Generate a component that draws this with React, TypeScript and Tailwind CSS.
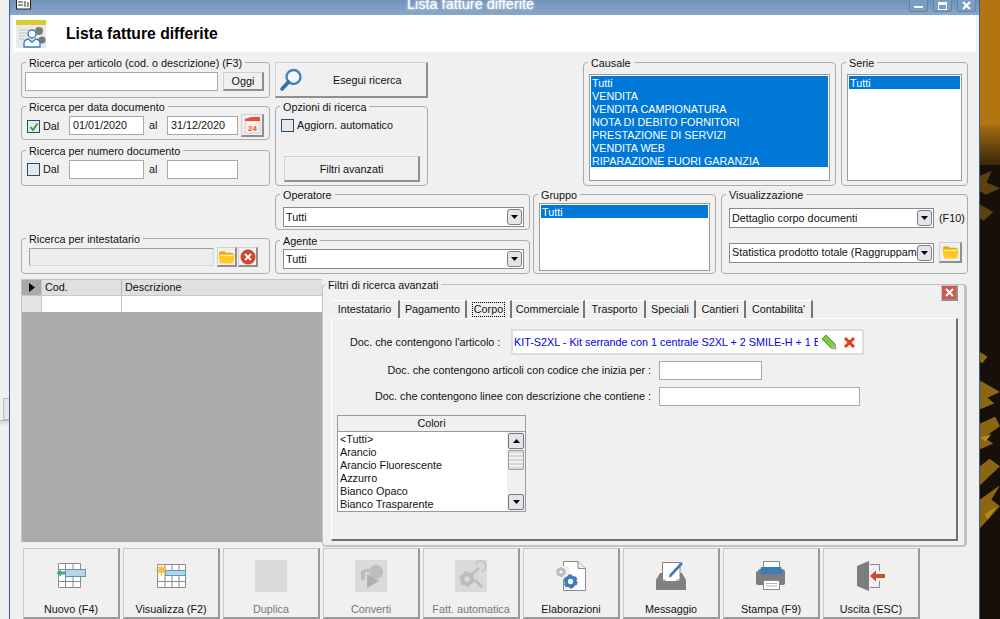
import React from 'react';

const Group: React.FC<{ title: string; className?: string; children?: React.ReactNode }> = ({ title, className = '', children }) => (
  <div className={`relative rounded-[4px] border border-[#ababab] ${className}`}>
    <span className="absolute left-[4px] top-[-7px] bg-[#f0f0f0] px-[3px] leading-[14px] whitespace-nowrap">{title}</span>
    {children}
  </div>
);

const bevel = 'border border-[#d0d0d0] border-r-2 border-b-2 border-r-[#8f8f8f] border-b-[#8f8f8f] bg-[#f0f0f0]';

const Input: React.FC<{ value?: string; className?: string }> = ({ value, className = '' }) => (
  <div className={`flex items-center border border-[#a9a9a9] bg-white pl-[3px] leading-none ${className}`}>{value}</div>
);

const Check: React.FC<{ checked?: boolean; className?: string }> = ({ checked, className = '' }) => (
  <div className={`flex h-[13px] w-[13px] shrink-0 items-center justify-center border border-[#1f4f7f] bg-[#e8e8e8] ${className}`}>
    {checked && (
      <svg width="10" height="10" viewBox="0 0 10 10">
        <path d="M1.5 5 L4 8 L8.5 1.5" fill="none" stroke="#1fa83a" strokeWidth="1.8" />
      </svg>
    )}
  </div>
);

const ComboArrow = () => (
  <div className="flex h-[16px] w-[15px] shrink-0 items-center justify-center rounded-[3px] border border-[#7f7f7f] bg-[#e4e4ea]">
    <svg width="7" height="4" viewBox="0 0 7 4"><path d="M0 0H7L3.5 4Z" fill="#000" /></svg>
  </div>
);

const Combo: React.FC<{ value: string; className?: string }> = ({ value, className = '' }) => (
  <div className={`flex items-center justify-between border border-[#8a8a8a] bg-white pl-[2px] pr-[1px] ${className}`}>
    <span className="overflow-hidden whitespace-nowrap">{value}</span>
    <ComboArrow />
  </div>
);

const ListBox: React.FC<{ items: string[]; className?: string }> = ({ items, className = '' }) => (
  <div className={`border border-[#9a9a9a] bg-white p-[1px] ${className}`}>
    {items.map((t) => (
      <div key={t} className="h-[13px] whitespace-nowrap bg-[#0078d7] pl-[1px] leading-[14px] text-white">{t}</div>
    ))}
  </div>
);

const Folder = () => (
  <svg width="17" height="14" viewBox="0 0 16 13">
    <path d="M1 2.5Q1 1 2.5 1H6L7.5 2.5H13Q14.5 2.5 14.5 4V5H1Z" fill="#e8a90c" />
    <path d="M0.5 5Q0.5 4 2 4H14Q15.5 4 15.5 5L14.5 11Q14.3 12.5 13 12.5H3Q1.7 12.5 1.5 11Z" fill="#ffc823" />
    <path d="M2 5H14" stroke="#fff3b8" strokeWidth="1" />
  </svg>
);

const RedCircleX = () => (
  <svg width="16" height="16" viewBox="0 0 16 16">
    <circle cx="8" cy="8" r="7.5" fill="#d2452f" />
    <path d="M5 5L11 11M11 5L5 11" stroke="#fff" strokeWidth="2" />
  </svg>
);

const Calendar = () => (
  <svg width="17" height="18" viewBox="0 0 17 18">
    <rect x="1" y="3" width="15" height="14" fill="#fbeeea" stroke="#cfcfcf" />
    <path d="M1 3Q8 0 16 1V5H1Z" fill="#d9533c" />
    <text x="8.5" y="14.5" textAnchor="middle" fontSize="8" fontWeight="700" fill="#d9533c" fontFamily="Liberation Sans, sans-serif">24</text>
  </svg>
);

const Magnifier = () => (
  <svg width="24" height="24" viewBox="0 0 24 24">
    <circle cx="14.5" cy="9" r="7" fill="#f4f8fb" stroke="#3f86c0" strokeWidth="2.4" />
    <path d="M9.5 14L3 21" stroke="#2f6fa8" strokeWidth="3.6" strokeLinecap="round" />
  </svg>
);

const Gear: React.FC<{ x: number; y: number; r: number; color: string }> = ({ x, y, r, color }) => (
  <g>
    <circle cx={x} cy={y} r={r * 0.68} fill="none" stroke={color} strokeWidth={r * 0.55} />
    <circle cx={x} cy={y} r={r * 0.95} fill="none" stroke={color} strokeWidth={r * 0.3} strokeDasharray={`${r * 0.55} ${r * 0.45}`} />
  </g>
);

const IconNuovo = () => (
  <svg width="32" height="32" viewBox="0 0 32 32">
    <path d="M3.5 3.5H25.5V27.5H3.5ZM3.5 9.5H25.5M3.5 21.5H25.5M10.5 3.5V27.5M18 3.5V27.5" fill="#fff" stroke="#8a8a8a" />
    <rect x="10.5" y="9.5" width="20" height="7" fill="#bcd2e6" stroke="#4a9cc2" />
    <path d="M1.5 13L6 9.5V11.5H10V14.5H6V16.5Z" fill="#4aa57f" />
  </svg>
);

const IconVisualizza = () => (
  <svg width="32" height="32" viewBox="0 0 32 32">
    <path d="M2.5 4.5H30.5V27.5H2.5ZM2.5 10.5H30.5M2.5 21.5H30.5M10 4.5V27.5M17 4.5V27.5M24 4.5V27.5" fill="#fff" stroke="#8a8a8a" />
    <rect x="10.5" y="10.5" width="20" height="5" fill="#bcd2e6" stroke="#4a9cc2" />
    <circle cx="6.5" cy="10" r="3" fill="#f6c243" />
    <path d="M6.5 4V16M0.5 10H12.5M2.5 6L10.5 14M10.5 6L2.5 14" stroke="#f6c243" strokeWidth="1.2" />
  </svg>
);

const IconBlank = () => <div className="h-[32px] w-[32px] bg-[#dadada]" />;

const IconConverti = () => (
  <svg width="32" height="32" viewBox="0 0 32 32">
    <rect width="32" height="32" fill="#dadada" />
    <path d="M6 11L14 8V12H10V20H6Z" fill="#bdbdbd" />
    <circle cx="21" cy="12" r="7" fill="#bdbdbd" />
    <path d="M12 14L24 21L12 28Z" fill="#b0b0b0" />
  </svg>
);

const IconFatt = () => (
  <svg width="32" height="32" viewBox="0 0 32 32">
    <rect width="32" height="32" fill="#dadada" />
    <Gear x={12} y={19} r={7} color="#bcbcbc" />
    <path d="M16 15L24 8M20 20L27 27" stroke="#bcbcbc" strokeWidth="2.5" />
    <path d="M21 5A5 5 0 1 1 27 11" fill="none" stroke="#c6c6c6" strokeWidth="2" />
  </svg>
);

const IconElab = () => (
  <svg width="32" height="32" viewBox="0 0 32 32">
    <path d="M8.5 1.5H23L30.5 8.5V30.5H8.5Z" fill="#fff" stroke="#8a8a8a" />
    <path d="M23 1.5V8.5H30.5" fill="#eee" stroke="#8a8a8a" />
    <rect x="1" y="6" width="13" height="14" fill="#f0f0f0" />
    <Gear x={6} y={12} r={4.5} color="#b9b9b9" />
    <Gear x={15.5} y={21.5} r={6.5} color="#3d7cb8" />
  </svg>
);

const IconMessaggio = () => (
  <svg width="32" height="32" viewBox="0 0 32 32">
    <path d="M7.5 2.5H25V22H7.5Z" fill="#fff" stroke="#858585" />
    <path d="M5 13H7.5V21H25V13H27L31 20V30H1V20Z" fill="#808080" />
    <path d="M1 20H10V23H22V20H31" fill="none" stroke="#808080" />
    <path d="M15 16L27 3" stroke="#3d7cb8" strokeWidth="2.6" />
    <path d="M14 17.5L14.5 15L16.3 16.7Z" fill="#3d7cb8" />
  </svg>
);

const IconStampa = () => (
  <svg width="32" height="32" viewBox="0 0 32 32">
    <rect x="8.5" y="1.5" width="16" height="8" fill="#fff" stroke="#8a8a8a" />
    <path d="M3 11Q3 9 5 9H27Q30 9 30 12V23Q30 25 28 25H4Q1 25 1 23V13Q1 11 3 11Z" fill="#7d7d7d" />
    <path d="M6 7H26L28 14H5Z" fill="#3d7cb8" />
    <rect x="8.5" y="20.5" width="16" height="9" fill="#fff" stroke="#8a8a8a" />
    <path d="M11 23.5H22M11 26H22" stroke="#b5b5b5" />
  </svg>
);

const IconUscita = () => (
  <svg width="32" height="32" viewBox="0 0 32 32">
    <path d="M15 4.5H24.5V11M24.5 21V27.5H15" fill="none" stroke="#8a8a8a" />
    <path d="M2 6L14 1V31L2 26Z" fill="#7d7d7d" />
    <path d="M15 16L21 10.5V14H30V18H21V21.5Z" fill="#d2452f" />
  </svg>
);

const toolbar: { label: string; icon: React.ReactNode; disabled?: boolean }[] = [
  { label: 'Nuovo (F4)', icon: <IconNuovo /> },
  { label: 'Visualizza (F2)', icon: <IconVisualizza /> },
  { label: 'Duplica', icon: <IconBlank />, disabled: true },
  { label: 'Converti', icon: <IconConverti />, disabled: true },
  { label: 'Fatt. automatica', icon: <IconFatt />, disabled: true },
  { label: 'Elaborazioni', icon: <IconElab /> },
  { label: 'Messaggio', icon: <IconMessaggio /> },
  { label: 'Stampa (F9)', icon: <IconStampa /> },
  { label: 'Uscita (ESC)', icon: <IconUscita /> },
];

const tabs: { label: string; w: string; active?: boolean }[] = [
  { label: 'Intestatario', w: 'w-[69px]' },
  { label: 'Pagamento', w: 'w-[67px]' },
  { label: 'Corpo', w: 'w-[45px]', active: true },
  { label: 'Commerciale', w: 'w-[73px]' },
  { label: 'Trasporto', w: 'w-[61px]' },
  { label: 'Speciali', w: 'w-[50px]' },
  { label: 'Cantieri', w: 'w-[50px]' },
  { label: "Contabilita'", w: 'w-[67px]' },
];

const colori = ['<Tutti>', 'Arancio', 'Arancio Fluorescente', 'Azzurro', 'Bianco Opaco', 'Bianco Trasparente'];
const causali = ['Tutti', 'VENDITA', 'VENDITA CAMPIONATURA', 'NOTA DI DEBITO FORNITORI', 'PRESTAZIONE DI SERVIZI', 'VENDITA WEB', 'RIPARAZIONE FUORI GARANZIA'];

// sfondo del desktop dietro la finestra
const Wallpaper = () => (
  <div className="flex w-[21px] shrink-0 flex-col border-l border-[#3f5f85]">
    <div className="h-[125px] shrink-0 bg-[#b27510]" />
    <div className="h-[40px] shrink-0 bg-gradient-to-b from-[#a86d0e] to-[#3a2808]" />
    <div className="flex-1 bg-[#17100a]">
      <svg width="20" height="454" viewBox="0 165 21 454" className="block">
        <path d="M0 165L12 160L7 172L21 178L6 185L0 181ZM0 195L14 203L4 212L0 210Z" fill="#5c4210" />
        <path d="M0 350L8 355L2 362L0 360ZM0 380L21 392L8 398L15 404L0 410ZM0 425L16 418L21 428L4 440L14 446L0 452ZM0 470L10 462L21 470L0 490ZM0 505L21 490L12 505L21 512L0 535Z" fill="#8a6514" />
        <path d="M0 440L12 436L6 444ZM5 520L18 512L8 526Z" fill="#b58a1d" />
      </svg>
    </div>
  </div>
);

export default function App() {
  return (
    <div className="flex h-[619px] w-[1000px] overflow-hidden bg-[#f0f0f0] font-['Liberation_Sans',Arial,sans-serif] text-[10.8px] text-[#111]">
      <div className="flex w-[10px] shrink-0 flex-col border-r border-[#3f5f85] pt-[398px]">
        <div className="ml-[3px] h-[22px] w-[6px] border border-r-0 border-[#bdbdbd] bg-[#e6e6e6]" />
        <div className="h-[6px] border-t border-[#b5b5b5] bg-gradient-to-b from-[#d8d8d8] to-[#f0f0f0]" />
      </div>

      <div className="flex w-[969px] shrink-0 flex-col">
        {/* title bar */}
        <div className="relative flex h-[15px] shrink-0 justify-center overflow-hidden bg-gradient-to-b from-[#6f93bb] to-[#89a8c9]">
          <span className="mr-[48px] mt-[-4px] text-[14.5px] leading-[16px] text-white [text-shadow:0_0_3px_#fff]">Lista fatture differite</span>
          <svg width="15" height="10" viewBox="0 0 15 10" className="absolute left-[6px] top-0">
            <rect x="0.5" y="-1" width="14" height="10" fill="#fff" stroke="#222" />
            <path d="M2 2H7M2 5H7M9 1V7M12 2V7" stroke="#333" />
          </svg>
          <div className="absolute right-[3px] top-0 flex gap-[5px]">
            {['min', 'max', 'close'].map((k) => (
              <div key={k} className="flex h-[12px] w-[19px] items-center justify-center rounded-b-[3px] border border-t-0 border-[#5f83ab] bg-[#7c9dc2]">
                {k === 'min' && <div className="mt-[3px] h-[2px] w-[9px] bg-white" />}
                {k === 'max' && <div className="h-[8px] w-[9px] border border-t-[3px] border-white" />}
                {k === 'close' && (
                  <svg width="9" height="9" viewBox="0 0 9 9"><path d="M1 1L8 8M8 1L1 8" stroke="#fff" strokeWidth="2.2" /></svg>
                )}
              </div>
            ))}
          </div>
        </div>

        {/* header */}
        <div className="mx-[3px] flex h-[37px] shrink-0 items-center bg-white pl-[3px]">
          <svg width="30" height="28" viewBox="0 0 30 28">
            <rect width="30" height="28" fill="#eaeaea" />
            <rect width="30" height="5" fill="#d6cd2e" />
            <path d="M3 10H13M3 13H11M3 16H9M3 19H8" stroke="#c2c2c2" />
            <circle cx="23" cy="11" r="4" fill="#7c7c7c" />
            <circle cx="26" cy="20" r="3.6" fill="#777" />
            <circle cx="16" cy="14" r="4" fill="#fff" stroke="#3d7cb8" strokeWidth="1.4" />
            <path d="M8 27V23Q8 20 12 19L16 22L20 19Q24 20 24 23V27Z" fill="#fff" stroke="#3d7cb8" strokeWidth="1.4" />
          </svg>
          <h1 className="ml-[20px] text-[15.7px] font-bold text-black">Lista fatture differite</h1>
        </div>

        {/* filtri superiori */}
        <div className="mt-[10px] flex h-[212px] shrink-0 gap-[5px] pl-[11px]">
          <div className="flex w-[249px] shrink-0 flex-col">
            <Group title="Ricerca per articolo (cod. o descrizione) (F3)" className="h-[36px] shrink-0">
              <div className="flex gap-[5px] pl-[3px] pt-[9px]">
                <Input className="h-[19px] w-[193px]" />
                <div className={`flex h-[19px] w-[41px] items-center justify-center pt-[1px] ${bevel}`}>Oggi</div>
              </div>
            </Group>
            <Group title="Ricerca per data documento" className="mt-[8px] h-[34px] shrink-0">
              <div className="flex items-center pl-[5px] pt-[7px]">
                <Check checked className="mt-[2px]" />
                <span className="ml-[3px] mt-[2px] w-[26px]">Dal</span>
                <Input value="01/01/2020" className="h-[19px] w-[75px]" />
                <span className="ml-[5px] w-[18px]">al</span>
                <Input value="31/12/2020" className="h-[19px] w-[71px]" />
                <div className={`ml-[3px] flex h-[23px] w-[23px] items-center justify-center ${bevel}`}><Calendar /></div>
              </div>
            </Group>
            <Group title="Ricerca per numero documento" className="mt-[10px] h-[36px] shrink-0">
              <div className="flex items-center pl-[5px] pt-[9px]">
                <Check />
                <span className="ml-[3px] w-[26px]">Dal</span>
                <Input className="h-[19px] w-[75px]" />
                <span className="ml-[5px] w-[18px]">al</span>
                <Input className="h-[19px] w-[71px]" />
              </div>
            </Group>
            <Group title="Ricerca per intestatario" className="mt-[52px] h-[36px] shrink-0">
              <div className="flex items-start pl-[7px] pt-[9px]">
                <div className="h-[18px] w-[185px] border border-[#a0a0a0] border-b-[#d8d8d8] border-r-[#d8d8d8] bg-[#ececec]" />
                <div className={`ml-[3px] mt-[-1px] flex h-[20px] w-[20px] items-center justify-center ${bevel}`}><Folder /></div>
                <div className={`ml-[1px] mt-[-1px] flex h-[20px] w-[20px] items-center justify-center ${bevel}`}><RedCircleX /></div>
              </div>
            </Group>
          </div>

          <div className="flex w-[693px] shrink-0 flex-col">
            <div className="flex h-[124px] shrink-0">
              <div className="flex w-[153px] shrink-0 flex-col">
                <div className={`flex h-[36px] shrink-0 items-center pl-[3px] ${bevel}`}>
                  <Magnifier />
                  <span className="ml-[30px] pt-[2px]">Esegui ricerca</span>
                </div>
                <Group title="Opzioni di ricerca" className="mt-[8px] flex-1">
                  <div className="flex items-center gap-[3px] pl-[5px] pt-[10px]">
                    <Check />
                    <span>Aggiorn. automatico</span>
                  </div>
                  <div className={`ml-[8px] mt-[23px] flex h-[26px] w-[136px] items-center justify-center ${bevel}`}>Filtri avanzati</div>
                </Group>
              </div>
              <Group title="Causale" className="ml-[155px] w-[253px] shrink-0 p-[5px] pt-[11px]">
                <ListBox items={causali} className="h-[107px]" />
              </Group>
              <Group title="Serie" className="ml-[5px] w-[127px] shrink-0 p-[5px] pt-[11px]">
                <ListBox items={['Tutti']} className="h-[107px]" />
              </Group>
            </div>

            <div className="mt-[8px] flex h-[80px] shrink-0">
              <div className="flex w-[255px] shrink-0 flex-col">
                <Group title="Operatore" className="h-[36px] shrink-0 pl-[7px] pr-[5px] pt-[12px]">
                  <Combo value="Tutti" className="h-[20px]" />
                </Group>
                <Group title="Agente" className="mt-[10px] h-[34px] shrink-0 pl-[7px] pr-[5px] pt-[8px]">
                  <Combo value="Tutti" className="h-[20px]" />
                </Group>
              </div>
              <Group title="Gruppo" className="ml-[3px] w-[183px] shrink-0 px-[5px] pb-[2px] pt-[8px]">
                <ListBox items={['Tutti']} className="h-full" />
              </Group>
              <Group title="Visualizzazione" className="ml-[5px] w-[247px] shrink-0 pl-[7px] pt-[13px]">
                <div className="flex items-center">
                  <Combo value="Dettaglio corpo documenti" className="h-[20px] w-[205px]" />
                  <span className="ml-[5px]">(F10)</span>
                </div>
                <div className="mt-[14px] flex items-center">
                  <Combo value="Statistica prodotto totale (Raggruppamento)" className="h-[20px] w-[205px]" />
                  <div className={`ml-[5px] flex h-[21px] w-[23px] items-center justify-center ${bevel}`}><Folder /></div>
                </div>
              </Group>
            </div>
          </div>
        </div>

        {/* griglia + filtri avanzati */}
        <div className="mt-[5px] flex h-[269px] shrink-0 pl-[11px]">
          <div className="flex h-[263px] w-[301px] shrink-0 flex-col border-l border-t border-[#c4c4c4] bg-[#ababab]">
            <div className="flex h-[15px] shrink-0 items-center bg-[#e0e0e0] leading-none">
              <div className="flex h-full w-[20px] items-center justify-center border-r border-[#c8c8c8] bg-[#a9a9a9]">
                <svg width="6" height="9" viewBox="0 0 6 9"><path d="M0 0L6 4.5L0 9Z" fill="#000" /></svg>
              </div>
              <div className="w-[80px] border-r border-[#bbb] pl-[3px] leading-[15px]">Cod.</div>
              <div className="pl-[3px]">Descrizione</div>
            </div>
            <div className="flex h-[17px] shrink-0 border-t border-[#c8c8c8] bg-white">
              <div className="w-[20px] border-r border-[#c8c8c8] bg-[#e4e4e4]" />
              <div className="w-[80px] border-r border-[#c8c8c8]" />
            </div>
          </div>

          <div className="relative mt-[5px] h-[263px] w-[645px] shrink-0 rounded-[4px] border border-b-2 border-r-[3px] border-[#c2c2c2] pl-[8px] pr-[7px] pt-[15px]">
            <span className="absolute left-[2px] top-[-7px] bg-[#f0f0f0] px-[3px] leading-[14px]">Filtri di ricerca avanzati</span>
            <div className="absolute right-[6px] top-0 flex h-[16px] w-[17px] items-center justify-center border border-b-2 border-r-2 border-[#c8c8c8] border-b-[#909090] border-r-[#909090] bg-[#f0f0f0]">
              <div className="flex h-[13px] w-[14px] items-center justify-center bg-[#d2574a]">
                <svg width="9" height="9" viewBox="0 0 9 9"><path d="M1 1L8 8M8 1L1 8" stroke="#fff" strokeWidth="2" /></svg>
              </div>
            </div>
            <div className="flex h-[18px] items-end">
              {tabs.map((t) => (
                <div key={t.label} className={`flex h-[18px] shrink-0 items-center justify-center border-r-2 border-t border-r-[#777] border-t-white ${t.w}`}>
                  <span className={t.active ? 'border border-dotted border-black px-[1px] leading-[13px]' : 'leading-[13px]'}>{t.label}</span>
                </div>
              ))}
            </div>
            <div className="flex h-[223px] w-[627px] flex-col border-b-2 border-l border-r-2 border-t border-b-[#707070] border-l-white border-r-[#707070] border-t-white">
              <div className="mt-[10px] flex shrink-0 items-center">
                <span className="ml-[18px] w-[161px] whitespace-nowrap">Doc. che contengono l'articolo :</span>
                <div className="flex h-[26px] w-[353px] items-center overflow-hidden border-2 border-[#dcdcdc] bg-white pl-[1px] pr-[6px]">
                  <span className="w-[304px] overflow-hidden whitespace-nowrap text-[#0000e0]">KIT-S2XL - Kit serrande con 1 centrale S2XL + 2 SMILE-H + 1 BOX</span>
                  <svg width="16" height="16" viewBox="0 0 16 16" className="ml-[3px] shrink-0">
                    <path d="M1 5L5 1L14 10L15 15L10 14Z" fill="#7ac943" stroke="#4f9a2a" />
                    <path d="M10 14L15 15L14 10Z" fill="#b5b5b5" />
                  </svg>
                  <svg width="13" height="13" viewBox="0 0 13 13" className="ml-[6px] shrink-0"><path d="M2 2L11 11M11 2L2 11" stroke="#e23b1e" strokeWidth="3" /></svg>
                </div>
              </div>
              <div className="mt-[6px] flex shrink-0 items-center">
                <span className="w-[319px] whitespace-nowrap text-right">Doc. che contengono articoli con codice che inizia per :</span>
                <Input className="ml-[8px] h-[19px] w-[103px]" />
              </div>
              <div className="mt-[7px] flex shrink-0 items-center">
                <span className="w-[319px] whitespace-nowrap text-right">Doc. che contengono linee con descrizione che contiene :</span>
                <Input className="ml-[8px] h-[19px] w-[201px]" />
              </div>
              <div className="ml-[5px] mt-[9px] w-[189px] shrink-0 border border-[#9a9a9a] bg-white">
                <div className="h-[16px] border-b border-[#9a9a9a] bg-[#f0f0f0] text-center leading-[14px]">Colori</div>
                <div className="flex h-[79px]">
                  <div className="flex-1 pl-[2px] pt-[1px]">
                    {colori.map((c) => (
                      <div key={c} className="h-[13px] leading-[13px]">{c}</div>
                    ))}
                  </div>
                  <div className="flex w-[18px] flex-col bg-[#f0f0f0] px-[1px] pt-[1px]">
                    <div className="flex h-[16px] items-center justify-center rounded-[2px] border border-[#777] bg-[#e4e4ea]">
                      <svg width="7" height="4" viewBox="0 0 7 4"><path d="M3.5 0L7 4H0Z" fill="#000" /></svg>
                    </div>
                    <div className="mt-[1px] h-[20px] rounded-[1px] border border-[#a0a0a0] bg-[repeating-linear-gradient(0deg,#d8d8d8_0,#d8d8d8_2px,#f0f0f0_2px,#f0f0f0_4px)]" />
                    <div className="mb-[1px] mt-auto flex h-[16px] items-center justify-center rounded-[2px] border border-[#777] bg-[#e4e4ea]">
                      <svg width="7" height="4" viewBox="0 0 7 4"><path d="M0 0H7L3.5 4Z" fill="#000" /></svg>
                    </div>
                  </div>
                </div>
              </div>
            </div>
          </div>
        </div>

        {/* toolbar */}
        <div className="flex gap-[3px] pl-[13px]">
          {toolbar.map((b) => (
            <div key={b.label} className="flex h-[71px] w-[97px] shrink-0 flex-col items-center border border-b-2 border-r-2 border-[#c8c8c8] border-b-[#999] border-r-[#999] pt-[11px]">
              {b.icon}
              <span className={`mt-auto pb-[1px] leading-[14px] ${b.disabled ? 'text-[#777]' : 'text-[#111]'}`}>{b.label}</span>
            </div>
          ))}
        </div>
      </div>

      <Wallpaper />
    </div>
  );
}
